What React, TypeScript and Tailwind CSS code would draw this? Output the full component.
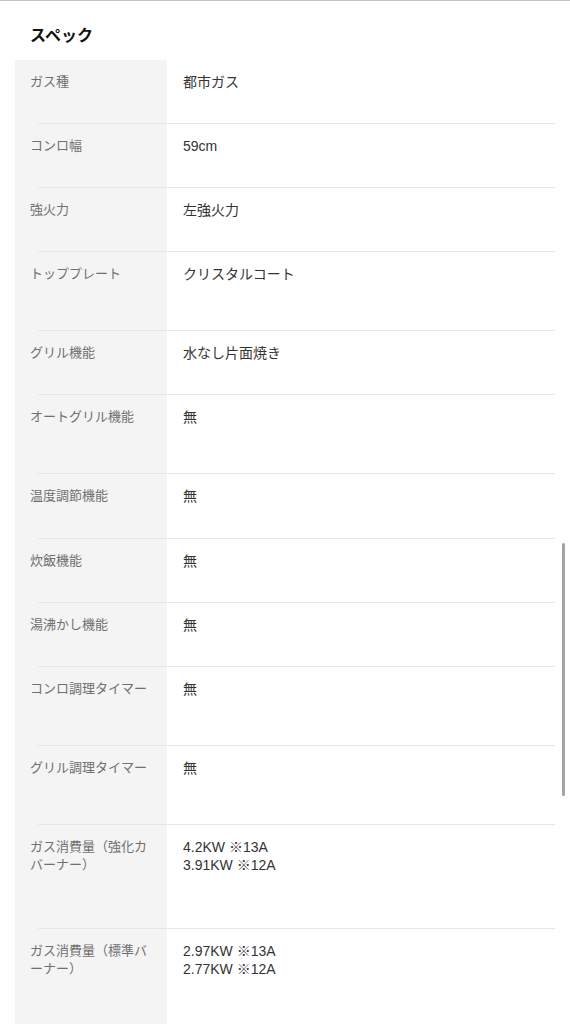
import React from "react";

type Spec = {
  label: string;
  value: string[];
  h: string;
};

const specs: Spec[] = [
  { label: "ガス種", value: ["都市ガス"], h: "h-[63px]" },
  { label: "コンロ幅", value: ["59cm"], h: "h-[63px]" },
  { label: "強火力", value: ["左強火力"], h: "h-[63px]" },
  { label: "トッププレート", value: ["クリスタルコート"], h: "h-[78px]" },
  { label: "グリル機能", value: ["水なし片面焼き"], h: "h-[63px]" },
  { label: "オートグリル機能", value: ["無"], h: "h-[78px]" },
  { label: "温度調節機能", value: ["無"], h: "h-[64px]" },
  { label: "炊飯機能", value: ["無"], h: "h-[63px]" },
  { label: "湯沸かし機能", value: ["無"], h: "h-[63px]" },
  { label: "コンロ調理タイマー", value: ["無"], h: "h-[78px]" },
  { label: "グリル調理タイマー", value: ["無"], h: "h-[78px]" },
  { label: "ガス消費量（強化カバーナー）", value: ["4.2KW ※13A", "3.91KW ※12A"], h: "h-[103px]" },
  { label: "ガス消費量（標準バーナー）", value: ["2.97KW ※13A", "2.77KW ※12A"], h: "h-[103px]" },
];

function Divider() {
  return (
    <div className="flex h-px">
      <div className="w-[23px] bg-[#f4f4f4]" />
      <div className="flex-1 bg-[#e6e6e6]" />
    </div>
  );
}

export default function App() {
  return (
    <div
      className="relative w-[570px] h-[1024px] overflow-hidden bg-white border-t border-[#c4c4c4]"
      style={{ fontFamily: '"Liberation Sans", "Noto Sans CJK JP", sans-serif' }}
    >
      <h2 className="pt-[23px] pl-[30px] text-[16px] leading-6 font-bold text-[#111]">スペック</h2>

      <div className="mt-[12px] mx-[15px]">
        {specs.map((s, i) => (
          <div key={i}>
            {i > 0 && <Divider />}
            <div className={`flex ${s.h}`}>
              <div className="w-[152px] shrink-0 bg-[#f4f4f4] pl-[15px] pr-[15px] pt-[13px] text-[13px] leading-[18px] text-[#707070]">
                {s.label}
              </div>
              <div className="flex-1 pl-[16px] pt-[13px] text-[14px] leading-[18px] text-[#333]">
                {s.value.map((v, j) => (
                  <div key={j}>{v}</div>
                ))}
              </div>
            </div>
          </div>
        ))}
      </div>

      <div className="absolute right-[5px] top-[542px] w-[3px] h-[253px] rounded-full bg-[#a3a3a3]" />
    </div>
  );
}
